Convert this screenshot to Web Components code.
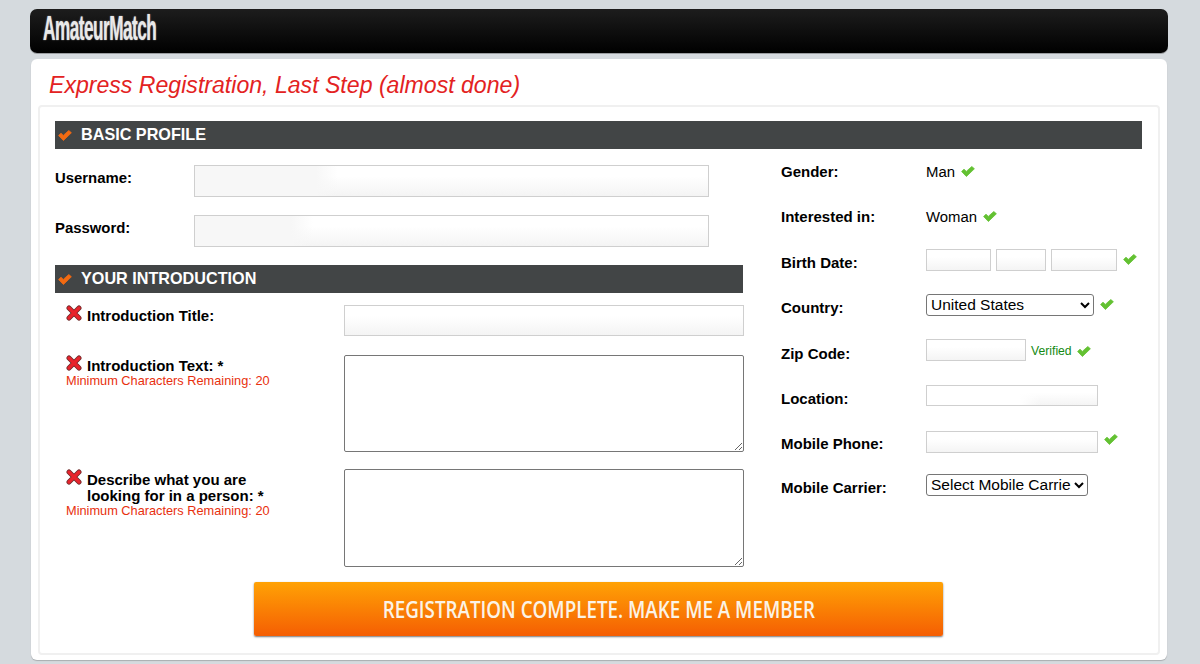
<!DOCTYPE html>
<html lang="en">
<head>
<meta charset="utf-8">
<title>AmateurMatch - Express Registration</title>
<style>
    html, body { margin: 0; height: 664px; overflow: hidden; }
    body {
        background: #d5dade;
        font-family: "Liberation Sans", Arial, sans-serif;
        color: #000;
    }
</style>
</head>
<body>
<am-page>
    <am-header slot="header" logo="AmateurMatch"></am-header>
    <am-card heading="Express Registration, Last Step (almost done)">
        <am-bar>BASIC PROFILE</am-bar>
        <am-columns>
            <div slot="left">
                <am-account-row label="Username:"><am-input w="515" h="32" patch="121"></am-input></am-account-row>
                <am-account-row label="Password:" style="margin-top:18px"><am-input w="515" h="32" patch="96"></am-input></am-account-row>
                <am-bar style="margin-top:18px">YOUR INTRODUCTION</am-bar>
                <am-intro-row label="Introduction Title:" style="margin-top:12px"><am-input w="400" h="31"></am-input></am-intro-row>
                <am-intro-row label="Introduction Text: *" hint="Minimum Characters Remaining: 20" style="margin-top:19px"><am-area h="97"></am-area></am-intro-row>
                <am-intro-row label="Describe what you are looking for in a person: *" hint="Minimum Characters Remaining: 20" style="margin-top:17px"><am-area h="98"></am-area></am-intro-row>
            </div>
            <div slot="right">
                <am-side-row label="Gender:"><span>Man</span><am-check color="#63c132"></am-check></am-side-row>
                <am-side-row label="Interested in:"><span>Woman</span><am-check color="#63c132"></am-check></am-side-row>
                <am-side-row label="Birth Date:" up><am-input w="65" h="22"></am-input><am-input w="50" h="22"></am-input><am-input w="66" h="22"></am-input><am-check color="#63c132"></am-check></am-side-row>
                <am-side-row label="Country:" up><am-select w="168" value="United States"></am-select><am-check color="#63c132"></am-check></am-side-row>
                <am-side-row label="Zip Code:" up low><am-input w="100" h="22"></am-input><am-verified></am-verified></am-side-row>
                <am-side-row label="Location:" up low><am-input w="172" h="21" patch="92" patchcolor="#fff" style="margin-top:2px"></am-input></am-side-row>
                <am-side-row label="Mobile Phone:" up low><am-input w="172" h="22" style="margin-top:4px"></am-input><am-check color="#63c132"></am-check></am-side-row>
                <am-side-row label="Mobile Carrier:" up><am-select w="162" value="Select Mobile Carrier"></am-select></am-side-row>
            </div>
        </am-columns>
        <am-submit>REGISTRATION COMPLETE. MAKE ME A MEMBER</am-submit>
    </am-card>
</am-page>

<script>
// little helper, every component just gives its html + css
class BaseEl extends HTMLElement {
    constructor() {
        super();
        this.attachShadow({mode: 'open'});
    }
    connectedCallback() {
        const template = document.createElement('template');
        template.innerHTML = `<style>${this.getStyle()}</style>${this.getHtml()}`;
        this.shadowRoot.appendChild(template.content.cloneNode(true));
    }
}

class AmPage extends BaseEl {
    getStyle() {
        return `
            :host { display: block; padding: 9px 32px 0 30px; }
        `;
    }
    getHtml() {
        return `<slot name="header"></slot><slot></slot>`;
    }
}

class AmHeader extends BaseEl {
    getStyle() {
        return `
            :host {
                display: block;
                height: 44px;
                box-sizing: border-box;
                border-radius: 7px;
                background: linear-gradient(#1d1d1d, #000);
                box-shadow: 0 1px 0 #9a9da0;
                overflow: hidden;
            }
            .logo {
                display: inline-block;
                margin: 0 0 0 13px;
                font: bold 35px/38px "Liberation Sans", Arial, sans-serif;
                color: #e9e9e9;
                letter-spacing: -1px;
                transform: scaleX(.49);
                transform-origin: left center;
                text-shadow: 0 0 2px #aaa;
            }
        `;
    }
    getHtml() {
        return `<span class="logo">${this.getAttribute('logo')}</span>`;
    }
}

class AmCard extends BaseEl {
    getStyle() {
        return `
            :host {
                display: block;
                height: 601px;
                box-sizing: border-box;
                margin: 6px 1px 0;
                padding: 0 7px;
                background: #fff;
                border-radius: 6px;
                box-shadow: 0 1px 1px #a9adb0;
            }
            h1 {
                margin: 0;
                height: 46px;
                padding-left: 11px;
                font: italic normal 23.1px/52px "Liberation Sans", Arial, sans-serif;
                color: #e32222;
            }
            .panel {
                height: 550px;
                box-sizing: border-box;
                padding: 14px 16px 0 15px;
                border: 2px solid #f0f0f0;
                border-radius: 4px;
            }
        `;
    }
    getHtml() {
        return `<h1>${this.getAttribute('heading')}</h1><div class="panel"><slot></slot></div>`;
    }
}

class AmBar extends BaseEl {
    getStyle() {
        return `
            :host {
                display: flex;
                align-items: center;
                height: 28px;
                padding-left: 3px;
                background: #424546;
                color: #fff;
                font: bold 16.2px "Liberation Sans", Arial, sans-serif;
            }
            am-check { margin-right: 9px; }
            span { margin-top: -2px; }
        `;
    }
    getHtml() {
        return `<am-check color="#f26a12"></am-check><span><slot></slot></span>`;
    }
}

class AmCheck extends BaseEl {
    getStyle() {
        return `
            :host { display: inline-block; width: 14px; height: 11px; flex: none; }
            svg { display: block; }
        `;
    }
    getHtml() {
        const color = this.getAttribute('color');
        return `<svg width="14" height="11" viewBox="0 0 14 11"><path d="M.6 5.5 L3 3.2 L5.3 5.4 L10.8 .5 L13.4 2.8 L5.4 10.5 Z" fill="${color}" stroke="${color}" stroke-width=".8" stroke-linejoin="round"/></svg>`;
    }
}

class AmCross extends BaseEl {
    getStyle() {
        return `
            :host { display: inline-block; width: 16px; height: 16px; flex: none; }
            svg { display: block; }
        `;
    }
    getHtml() {
        return `<svg width="16" height="16" viewBox="0 0 16 16">
            <path d="M3 3 L13 13 M13 3 L3 13" stroke="#6d2a2a" stroke-width="5" stroke-linecap="round"/>
            <path d="M3 3 L13 13 M13 3 L3 13" stroke="#e8242c" stroke-width="3.4" stroke-linecap="round"/>
        </svg>`;
    }
}

class AmColumns extends BaseEl {
    getStyle() {
        return `
            :host { display: grid; grid-template-columns: 688px 1fr; column-gap: 38px; }
            .left { padding-top: 16px; }
        `;
    }
    getHtml() {
        return `<div class="left"><slot name="left"></slot></div><div><slot name="right"></slot></div>`;
    }
}

class AmInput extends BaseEl {
    getStyle() {
        const patch = this.getAttribute('patch');
        const patchColor = this.getAttribute('patchcolor') || '#f7f7f7';
        const patchBg = patch
            ? `linear-gradient(90deg, ${patchColor} ${patch}px, transparent ${Number(patch) + 22}px),`
            : '';
        return `
            :host { display: block; flex: none; }
            input {
                display: block;
                box-sizing: border-box;
                width: ${this.getAttribute('w')}px;
                height: ${this.getAttribute('h')}px;
                margin: 0;
                padding: 0 4px;
                border: 1px solid #cfcfcf;
                border-radius: 0;
                outline: none;
                background: ${patchBg} linear-gradient(#fff 35%, #f4f4f4);
            }
        `;
    }
    getHtml() {
        return `<input type="text">`;
    }
}

class AmArea extends BaseEl {
    getStyle() {
        return `
            :host { display: block; }
            textarea {
                display: block;
                box-sizing: border-box;
                width: 400px;
                height: ${this.getAttribute('h')}px;
                margin: 0;
                border: 1px solid #767676;
                border-radius: 2px;
                background: #fff;
            }
        `;
    }
    getHtml() {
        return `<textarea></textarea>`;
    }
}

class AmSelect extends BaseEl {
    getStyle() {
        return `
            :host { display: block; flex: none; }
            select {
                display: block;
                box-sizing: border-box;
                width: ${this.getAttribute('w')}px;
                height: 22px;
                margin: 0;
                font: 15.5px "Liberation Sans", Arial, sans-serif;
                color: #000;
                background: #fff;
                border: 1px solid #767676;
                border-radius: 3px;
            }
        `;
    }
    getHtml() {
        const value = this.getAttribute('value');
        return `<select><option>${value}</option></select>`;
    }
}

class AmAccountRow extends BaseEl {
    getStyle() {
        return `
            :host { display: grid; grid-template-columns: 139px 1fr; align-items: center; }
            .label { font: bold 14.9px "Liberation Sans", Arial, sans-serif; margin-top: -7px; }
        `;
    }
    getHtml() {
        return `<div class="label">${this.getAttribute('label')}</div><slot></slot>`;
    }
}

class AmIntroRow extends BaseEl {
    getStyle() {
        return `
            :host { display: grid; grid-template-columns: 278px 400px; padding-left: 11px; }
            .head { display: flex; gap: 5px; align-items: flex-start; }
            .text {
                font: bold 15px/16px "Liberation Sans", Arial, sans-serif;
                padding-top: 3px;
                width: 190px;
            }
            .hint {
                font: 12.77px/15px "Liberation Sans", Arial, sans-serif;
                color: #e8300e;
                margin-top: -1px;
            }
        `;
    }
    getHtml() {
        const label = this.getAttribute('label');
        const hint = this.getAttribute('hint');
        return `
            <div>
                <div class="head"><am-cross></am-cross><div class="text" style="${label.length < 25 ? 'white-space:nowrap' : ''}">${label}</div></div>
                ${hint ? `<div class="hint">${hint}</div>` : ''}
            </div>
            <slot></slot>`;
    }
}

class AmSideRow extends BaseEl {
    getStyle() {
        return `
            :host { display: grid; grid-template-columns: 145px 1fr; align-items: center; height: 45px; }
            .label { font: bold 15px "Liberation Sans", Arial, sans-serif; }
            :host([up]) .label { margin-top: 1px; }
            :host([low]) .label { margin-top: 3px; }
            .value {
                display: flex;
                align-items: center;
                gap: 5px;
                font: 14.9px "Liberation Sans", Arial, sans-serif;
            }
            ::slotted(am-check) { margin-left: 1px; }
            :host([up]) .value { margin-top: -4px; }
        `;
    }
    getHtml() {
        return `<div class="label">${this.getAttribute('label')}</div><div class="value"><slot></slot></div>`;
    }
}

class AmVerified extends BaseEl {
    getStyle() {
        return `
            :host {
                display: inline-flex;
                align-items: center;
                gap: 5px;
                margin-top: 3px;
                font: 12.2px "Liberation Sans", Arial, sans-serif;
                color: #138a13;
            }
        `;
    }
    getHtml() {
        return `Verified<am-check color="#63c132"></am-check>`;
    }
}

class AmSubmit extends BaseEl {
    getStyle() {
        return `
            :host { display: flex; justify-content: center; margin-top: 15px; }
            button {
                width: 689px;
                height: 54px;
                padding: 0;
                border: 0;
                border-radius: 2px;
                background: linear-gradient(#ffa205, #f55e03);
                box-shadow: 0 1px 2px #777;
                color: #fbf3e6;
            }
            span {
                display: inline-block;
                font: 22.5px "Open Sans", Arial, sans-serif;
                font-weight: 600;
                transform: scaleX(.835);
                white-space: nowrap;
            }
        `;
    }
    getHtml() {
        return `<button type="button"><span><slot></slot></span></button>`;
    }
}

customElements.define('am-page', AmPage);
customElements.define('am-header', AmHeader);
customElements.define('am-card', AmCard);
customElements.define('am-bar', AmBar);
customElements.define('am-check', AmCheck);
customElements.define('am-cross', AmCross);
customElements.define('am-columns', AmColumns);
customElements.define('am-input', AmInput);
customElements.define('am-area', AmArea);
customElements.define('am-select', AmSelect);
customElements.define('am-account-row', AmAccountRow);
customElements.define('am-intro-row', AmIntroRow);
customElements.define('am-side-row', AmSideRow);
customElements.define('am-verified', AmVerified);
customElements.define('am-submit', AmSubmit);
</script>
</body>
</html>
